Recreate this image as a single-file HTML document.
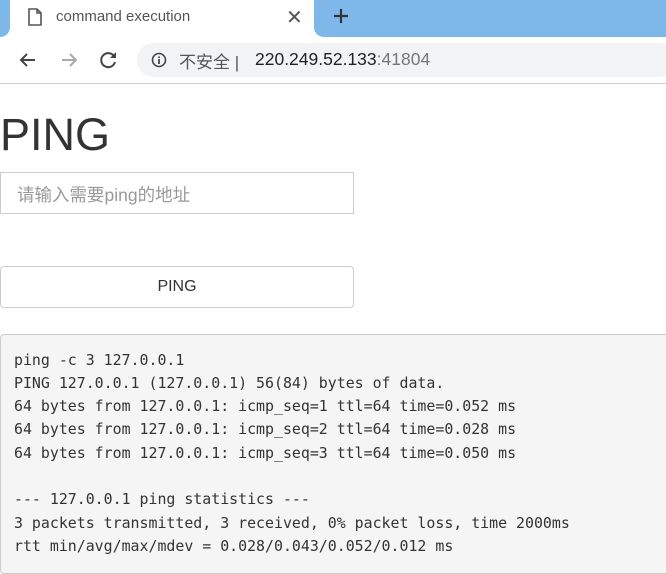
<!DOCTYPE html>
<html><head><meta charset="utf-8"><style>
*{margin:0;padding:0;box-sizing:border-box}
body{width:666px;height:545px;overflow:hidden;background:#fff;font-family:"Liberation Sans","Noto Sans CJK SC",sans-serif;position:relative}
.tabbar{position:absolute;left:0;top:0;width:666px;height:37px;background:#7db8e8}
.tab{position:absolute;left:10px;top:0;width:304px;height:37px;background:#fff}
.tab:before{content:"";position:absolute;left:-10px;bottom:0;width:10px;height:10px;background:radial-gradient(circle at 0 0,#7db8e8 10px,#fff 10px)}
.tab:after{content:"";position:absolute;right:-10px;bottom:0;width:10px;height:10px;background:radial-gradient(circle at 100% 0,#7db8e8 10px,#fff 10px)}
.t{position:absolute;font-size:15px;color:#444}
.omni{position:absolute;left:137px;top:43px;width:540px;height:34px;background:#f1f3f4;border-radius:17px}
.line{position:absolute;left:0;top:83px;width:666px;height:1px;background:#ccc}
h1{position:absolute;left:0;top:109px;font-weight:normal;font-size:45px;color:#333}
.inp{position:absolute;left:0;top:172px;width:354px;height:42px;border:1px solid #ccc;font-size:17.5px;color:#999;padding:9px 16px}
.btn{position:absolute;left:0;top:266px;width:354px;height:42px;border:1px solid #ccc;border-radius:4px;font-size:16px;color:#333;text-align:center;line-height:40px}
pre{position:absolute;left:0;top:334px;width:680px;height:240px;background:#f5f5f5;border:1px solid #ccc;border-radius:4px;padding:13.5px 13px;font-family:"DejaVu Sans Mono",monospace;font-size:14.9px;line-height:23.3px;color:#333}
</style></head><body>
<div class="tabbar"></div>
<div class="tab"></div>
<svg style="position:absolute;left:28px;top:8px" width="14" height="18" viewBox="0 0 14 18"><path d="M1 1h8l4 4v12H1z M9 1v4h4" fill="none" stroke="#555" stroke-width="1.6"/></svg>
<div class="t" style="left:56px;top:8px;color:#555">command execution</div>
<div class="t" style="left:286px;top:5px;font-size:20px;color:#555">✕</div>
<svg style="position:absolute;left:333px;top:8px" width="16" height="16"><path d="M8 1v14M1 8h14" stroke="#333" stroke-width="2.2"/></svg>
<svg style="position:absolute;left:18px;top:51px" width="20" height="18"><path d="M17 9H3M9 3L3 9l6 6" fill="none" stroke="#444" stroke-width="2"/></svg>
<svg style="position:absolute;left:59px;top:51px" width="20" height="18"><path d="M3 9h14M11 3l6 6-6 6" fill="none" stroke="#aaa" stroke-width="2"/></svg>
<svg style="position:absolute;left:99px;top:50px" width="20" height="20"><path d="M15.5 7A7 7 0 1 0 16 12" fill="none" stroke="#444" stroke-width="2"/><path d="M17 2v6h-6z" fill="#444"/></svg>
<div class="omni"></div>
<svg style="position:absolute;left:151px;top:52px" width="16" height="16"><circle cx="8" cy="8" r="6.5" fill="none" stroke="#444" stroke-width="1.6"/><path d="M8 7v5M8 4.5v1.5" stroke="#444" stroke-width="1.8"/></svg>
<div class="t" style="left:179px;top:48px;font-size:17px;color:#555">不安全 | </div>
<div class="t" style="left:255px;top:49px;font-size:17.5px;color:#222">220.249.52.133<span style="color:#777">:41804</span></div>
<div class="line"></div>
<h1>PING</h1>
<div class="inp">请输入需要ping的地址</div>
<div class="btn">PING</div>
<pre>ping -c 3 127.0.0.1
PING 127.0.0.1 (127.0.0.1) 56(84) bytes of data.
64 bytes from 127.0.0.1: icmp_seq=1 ttl=64 time=0.052 ms
64 bytes from 127.0.0.1: icmp_seq=2 ttl=64 time=0.028 ms
64 bytes from 127.0.0.1: icmp_seq=3 ttl=64 time=0.050 ms

--- 127.0.0.1 ping statistics ---
3 packets transmitted, 3 received, 0% packet loss, time 2000ms
rtt min/avg/max/mdev = 0.028/0.043/0.052/0.012 ms</pre>
</body></html>
